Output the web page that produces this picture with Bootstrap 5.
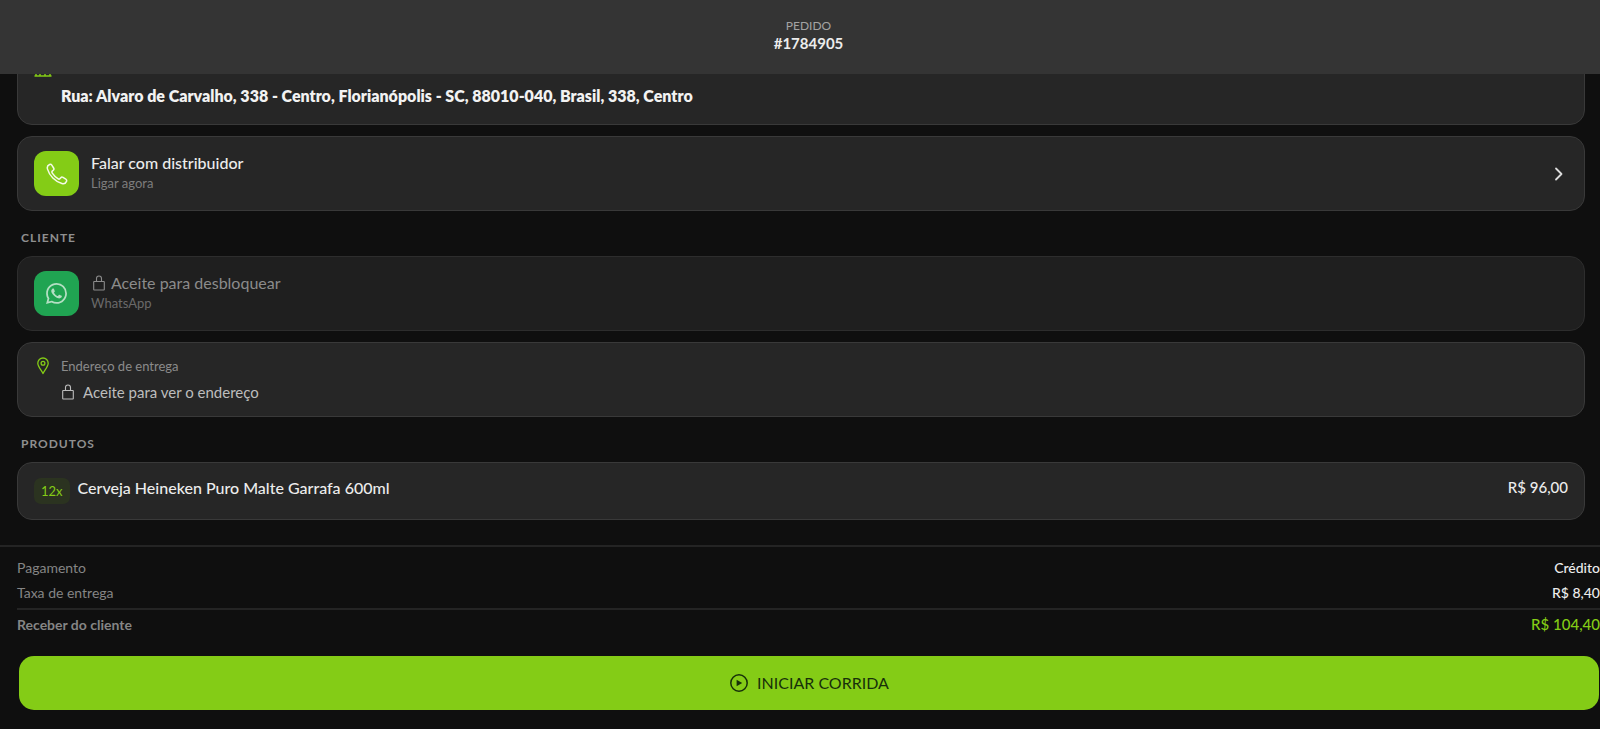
<!DOCTYPE html>
<html lang="pt-BR">
<head>
<meta charset="utf-8">
<meta name="viewport" content="width=device-width, initial-scale=1">
<title>Pedido #1784905</title>
<link href="https://cdn.jsdelivr.net/npm/bootstrap@5.3.0/dist/css/bootstrap.min.css" rel="stylesheet">
<style>
  :root { --lime: #84cc16; --edge: #393939; --panel: #262626; --ink: #ececec; --dim: #858585; }
  body { background: #0f0f0f; color: var(--ink); font-family: Lato, "Liberation Sans", sans-serif; font-size: 16px; line-height: 20px; }
  svg { display: block; flex: none; fill: none; stroke: currentColor; stroke-linecap: round; stroke-linejoin: round; }
  .lime { color: var(--lime); }
  .topbar { background: #343434; height: 74px; padding: 17px 0 0 17px; }
  .topbar-label { font-size: 12px; line-height: 17px; color: #a3a3a3; }
  .topbar-id { font-size: 15px; line-height: 18px; font-weight: 700; }
  .order-list { padding: 0 15px 25px 17px; min-height: 0; }
  .panel { background: var(--panel); border: 1px solid var(--edge); border-radius: 15px; padding: 14px 16px; color: var(--ink); flex: none; }
  .panel-locked { background: #1f1f1f; border-color: #2d2d2d; color: #8b8b8b; }
  .tile { width: 45px; height: 45px; border-radius: 12px; background: var(--lime); color: #f4fae8; flex: none; }
  .tile-wa { background: #20a452; color: #b4dfc3; }
  .panel-sub { font-size: 13px; line-height: 20px; color: #7d7d7d; }
  .panel-text { padding: 0 0 2px 12px; }
  .panel-locked .panel-sub { color: #6a6a6a; }
  .panel-label { font-size: 13px; line-height: 18px; color: #8b8b8b; }
  .section-title { font-size: 12px; line-height: 18px; font-weight: 700; letter-spacing: 1px; color: #8f8f8f; margin: 18px 0 9px 4px; flex: none; }
  .gap-list { margin-top: 11px; }
  .indent { padding-left: 27px; }
  .address { font-weight: 800; padding: 9px 0 4px 27px; color: #f2f2f2; }
  .locked-line { font-size: 15px; color: #bdbdbd; margin-top: 7px; }
  .chevron { color: #dcdcdc; }
  .qty { background: #2b3320; color: var(--lime); border-radius: 7px; font-size: 13px; padding: 3px 7px; }
  .product { min-height: 58px; padding-top: 15px; }
  .price { font-size: 15px; line-height: 18px; }
  .footer-bar { border-top: 2px solid #242424; padding: 8px 0 19px 17px; }
  .totals { margin-bottom: 19px; }
  .sum-row { line-height: 25px; }
  .sum-row dt { font-size: 14px; font-weight: 400; color: var(--dim); }
  .sum-row dd { font-size: 14px; margin: 0; font-weight: 500; }
  .sum-total { border-top: 2px solid #242424; margin-top: 3px; padding-top: 2px; }
  .sum-total dt { font-weight: 700; }
  .sum-total dd { font-size: 15px; color: var(--lime); }
  .start-btn { background: var(--lime); color: #17300a; border: 0; border-radius: 15px; height: 54px; font-size: 16px; margin: 0 1px 0 2px; }
  .start-btn:hover { background: #78ba14; color: #17300a; }
</style>
</head>
<body>
<div class="d-flex flex-column vh-100 overflow-hidden">
  <header class="topbar text-center flex-shrink-0">
    <div class="topbar-label">PEDIDO</div>
    <div class="topbar-id">#1784905</div>
  </header>

  <main class="order-list d-flex flex-column justify-content-end flex-grow-1 overflow-hidden">
    <section class="panel">
      <svg class="lime" width="18" height="16" viewBox="0 0 18 16" stroke-width="1.5" aria-hidden="true"><path d="M1 6l2-5h12l2 5M2 7v8h14V7M6 15V10h5v5M1 15h16"/></svg>
      <div class="address">Rua: Alvaro de Carvalho, 338 - Centro, Florianópolis - SC, 88010-040, Brasil, 338, Centro</div>
    </section>

    <a href="#ligar" class="panel gap-list d-flex align-items-center text-decoration-none">
      <span class="tile d-flex align-items-center justify-content-center">
        <svg width="22" height="22" viewBox="0 0 22 22" stroke-width="1.500" aria-hidden="true"><path d="M3.600 1.500C1.700 2.300.9 4 1.500 6.100C3.400 12.600 9 18.500 15.900 20.500C18 21.100 19.700 20.300 20.500 18.400C20.900 17.400 20.600 16.700 19.800 16.200L17 14.400C16.200 13.900 15.400 14 14.800 14.700L14.100 15.500C13.500 16.200 12.700 16.300 11.900 15.700C9.700 14.200 7.800 12.300 6.300 10.100C5.700 9.300 5.800 8.500 6.500 7.900L7.300 7.200C8 6.600 8.100 5.800 7.600 5L5.800 2.200C5.300 1.400 4.600 1.100 3.600 1.500Z"/></svg>
      </span>
      <span class="panel-text flex-grow-1">
        <span class="d-block fw-medium">Falar com distribuidor</span>
        <span class="d-block panel-sub">Ligar agora</span>
      </span>
      <svg class="chevron me-1" width="10" height="14" viewBox="0 0 10 14" stroke-width="1.800" aria-hidden="true"><path d="M2 1.500L7.500 7L2 12.500"/></svg>
    </a>

    <h2 class="section-title">CLIENTE</h2>
    <section class="panel panel-locked d-flex align-items-center">
      <span class="tile tile-wa d-flex align-items-center justify-content-center">
        <svg width="21" height="21" viewBox="0 0 24 24" aria-hidden="true"><path fill="currentColor" stroke="none" d="M17.472 14.382c-.297-.149-1.758-.867-2.030-.967-.273-.099-.471-.148-.670.150-.197.297-.767.966-.940 1.164-.173.199-.347.223-.644.075-.297-.150-1.255-.463-2.390-1.475-.883-.788-1.480-1.761-1.653-2.059-.173-.297-.018-.458.130-.606.134-.133.298-.347.446-.520.149-.174.198-.298.298-.497.099-.198.050-.371-.025-.520-.075-.149-.669-1.612-.916-2.207-.242-.579-.487-.500-.669-.510-.173-.008-.371-.010-.570-.010-.198 0-.520.074-.792.372-.272.297-1.040 1.016-1.040 2.479 0 1.462 1.065 2.875 1.213 3.074.149.198 2.096 3.200 5.077 4.487.709.306 1.262.489 1.694.625.712.227 1.360.195 1.871.118.571-.085 1.758-.719 2.006-1.413.248-.694.248-1.289.173-1.413-.074-.124-.272-.198-.570-.347m-5.421 7.403h-.004a9.870 9.870 0 01-5.031-1.378l-.361-.214-3.741.982.998-3.648-.235-.374a9.860 9.860 0 01-1.510-5.260c.001-5.450 4.436-9.884 9.888-9.884 2.640 0 5.122 1.030 6.988 2.898a9.825 9.825 0 012.893 6.994c-.003 5.450-4.437 9.884-9.885 9.884m8.413-18.297A11.815 11.815 0 0012.050 0C5.495 0 .160 5.335.157 11.892c0 2.096.547 4.142 1.588 5.945L.057 24l6.305-1.654a11.882 11.882 0 005.683 1.448h.005c6.554 0 11.890-5.335 11.893-11.893a11.821 11.821 0 00-3.480-8.413z"/></svg>
      </span>
      <div class="panel-text">
        <div class="d-flex align-items-center gap-1">
          <svg width="16" height="16" viewBox="-2 0 16 16" stroke-width="1.100" aria-hidden="true"><path d="M1.200 6.500h9.600q.5 0 .5.500v7.500q0 .5-.5.500h-9.600q-.5 0-.5-.5v-7.500q0-.5.5-.5zM3.500 6.500V3.500a2.500 2.500 0 0 1 5 0v3"/></svg>
          <span>Aceite para desbloquear</span>
        </div>
        <div class="panel-sub">WhatsApp</div>
      </div>
    </section>

    <section class="panel gap-list">
      <div class="d-flex align-items-center">
        <svg class="lime me-2" width="19" height="18" viewBox="-3 0 19 18" stroke-width="1.300" aria-hidden="true"><path d="M6 16.600C5 14 .8 9.500.8 6.200a5.200 5.200 0 0 1 10.400 0C11.200 9.500 7 14 6 16.600z"/><circle cx="6" cy="6.200" r="1.900"/></svg>
        <span class="panel-label">Endereço de entrega</span>
      </div>
      <div class="indent locked-line d-flex align-items-center">
        <svg class="me-2" width="14" height="16" viewBox="-1 0 14 16" stroke-width="1.100" aria-hidden="true"><path d="M1.200 6.500h9.600q.5 0 .5.500v7.500q0 .5-.5.500h-9.600q-.5 0-.5-.5v-7.500q0-.5.5-.5zM3.500 6.500V3.500a2.500 2.500 0 0 1 5 0v3"/></svg>
        <span>Aceite para ver o endereço</span>
      </div>
    </section>

    <h2 class="section-title">PRODUTOS</h2>
    <section class="panel product d-flex align-items-start">
      <span class="qty">12x</span>
      <span class="fw-medium ms-2 flex-grow-1">Cerveja Heineken Puro Malte Garrafa 600ml</span>
      <span class="fw-medium price">R$ 96,00</span>
    </section>
  </main>

  <footer class="footer-bar flex-shrink-0">
    <dl class="totals">
      <div class="sum-row d-flex justify-content-between"><dt>Pagamento</dt><dd>Crédito</dd></div>
      <div class="sum-row d-flex justify-content-between"><dt>Taxa de entrega</dt><dd>R$ 8,40</dd></div>
      <div class="sum-row sum-total d-flex justify-content-between"><dt>Receber do cliente</dt><dd>R$ 104,40</dd></div>
    </dl>
    <div class="d-grid">
      <button type="button" class="btn start-btn d-flex align-items-center justify-content-center gap-2">
        <svg width="20" height="20" viewBox="0 0 20 20" stroke-width="1.500" aria-hidden="true"><circle cx="10" cy="10" r="8.200"/><path fill="currentColor" stroke="none" d="M7.600 6.800v6.400L13.200 10z"/></svg>
        INICIAR CORRIDA
      </button>
    </div>
  </footer>
</div>
<script src="https://cdn.jsdelivr.net/npm/bootstrap@5.3.0/dist/js/bootstrap.bundle.min.js"></script>
</body>
</html>
